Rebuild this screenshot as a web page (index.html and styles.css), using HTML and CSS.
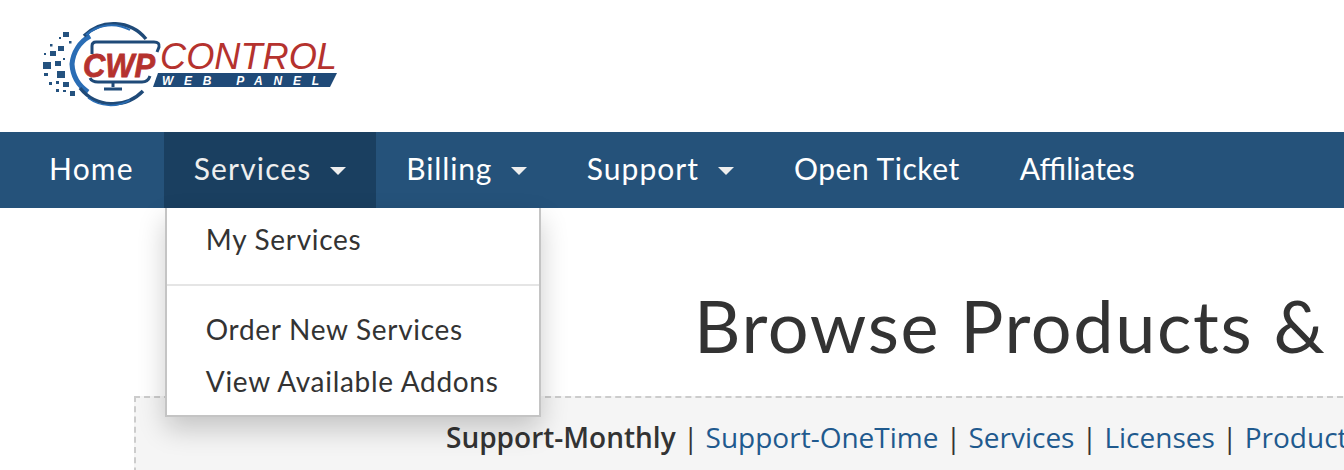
FILE: index.html

```html
<!DOCTYPE html>
<html lang="en">
  <head>
    <meta name="viewport" content="width=device-width, initial-scale=1">
    <title>Browse Products</title>
    <link rel="stylesheet" href="styles.css">
  </head>
  <body>
    <header class="top">
      <svg class="logo" width="320" height="105" viewBox="0 0 320 105">
        <g fill="#24527f">
          <rect x="33" y="22" width="6" height="5"/>
          <rect x="29" y="27" width="2" height="2"/>
          <rect x="39" y="31" width="2.500" height="2.500"/>
          <rect x="20" y="34" width="2.500" height="2.500"/>
          <rect x="28" y="36" width="6" height="5"/>
          <rect x="20" y="41" width="6" height="5"/>
          <rect x="14" y="43" width="2" height="2"/>
          <rect x="33" y="48" width="2" height="2"/>
          <rect x="13" y="52" width="8" height="7"/>
          <rect x="25" y="51" width="6" height="5"/>
          <rect x="14" y="63" width="4" height="3"/>
          <rect x="27" y="61" width="8" height="7"/>
          <rect x="19" y="72" width="3" height="3"/>
          <rect x="26" y="71" width="3" height="3"/>
          <rect x="33" y="72" width="6" height="5"/>
          <rect x="26" y="79" width="3" height="3"/>
          <rect x="33" y="80" width="3" height="2"/>
          <rect x="40" y="81" width="5" height="5"/>
        </g>
        <path d="M60 26 A36 36 0 0 0 42 54 A36 36 0 0 0 58 82" fill="none" stroke="#2a6db5" stroke-width="5"/>
        <path d="M54 26 A42 42 0 0 1 116 29" fill="none" stroke="#1f4a78" stroke-width="3.500"/>
        <path d="M56 25 A38 38 0 0 1 100 20" fill="none" stroke="#2a6db5" stroke-width="2"/>
        <path d="M62 44 V36 Q62 32 66 32 H124 Q130 32 129 37 L127 42" fill="none" stroke="#1f4a78" stroke-width="3"/>
        <path d="M60 68 Q62 72 68 72 H112 Q118 72 120 66" fill="none" stroke="#1f4a78" stroke-width="3"/>
        <path d="M83 72 V77 M74 79 H92" fill="none" stroke="#1f4a78" stroke-width="3"/>
        <path d="M50 78 A42 42 0 0 0 113 81" fill="none" stroke="#1f4a78" stroke-width="3.500"/>
        <path d="M58 88 A38 38 0 0 0 100 90" fill="none" stroke="#2a6db5" stroke-width="1.500"/>
        <text class="logo-cwp" x="53" y="67" textLength="72" lengthAdjust="spacingAndGlyphs">CWP</text>
        <text class="logo-control" x="130" y="59" textLength="177" lengthAdjust="spacingAndGlyphs">CONTROL</text>
        <polygon points="128,63 307,63 300,77 123,77" fill="#1f4a78"/>
        <text class="logo-panel" x="132" y="75" textLength="157">WEB PANEL</text>
      </svg>
    </header>

    <nav class="menu">
      <a class="menu-item home" href="#">Home</a>
      <div class="menu-group">
        <a class="menu-item active" href="#">Services <span class="caret"></span></a>
        <div class="dropdown">
          <a class="drop-first" href="#">My Services</a>
          <hr>
          <a href="#">Order New Services</a>
          <a href="#">View Available Addons</a>
        </div>
      </div>
      <a class="menu-item billing" href="#">Billing <span class="caret"></span></a>
      <a class="menu-item support" href="#">Support <span class="caret"></span></a>
      <a class="menu-item ticket" href="#">Open Ticket</a>
      <a class="menu-item affiliates" href="#">Affiliates</a>
    </nav>

    <main class="content">
      <h1>Browse Products &amp; Services</h1>
      <div class="cats">
        <b>Support-Monthly</b> | <a href="#">Support-OneTime</a> | <a href="#">Services</a> | <a href="#">Licenses</a> | <a href="#">Products</a>
      </div>
    </main>
  </body>
</html>
```

FILE: styles.css

```css
html {
  height: 100%;
}

body {
  margin: 0;
  height: 100%;
  overflow: hidden;
  background-color: #fff;
  color: #333;
  font-family: 'Lato', 'Open Sans', sans-serif;
}

a {
  text-decoration: none;
}

.top {
  height: 122px;
  padding: 10px 0 0 30px;
}

.logo {
  display: block;
}

.logo-cwp {
  font: italic bold 33px 'Liberation Sans', sans-serif;
  fill: #b5322e;
  stroke: #b5322e;
  stroke-width: 0.8px;
}

.logo-control {
  font: italic 36px 'Liberation Sans', sans-serif;
  fill: #b5322e;
}

.logo-panel {
  font: italic bold 12px 'Liberation Sans', sans-serif;
  fill: #fff;
}

.menu {
  display: flex;
  height: 76px;
  padding-left: 19px;
  background-color: #25527a;
}

.menu-group {
  position: relative;
  display: flex;
}

.menu-item {
  display: flex;
  align-items: center;
  padding: 0 30px 4px;
  color: #fff;
  font-size: 30px;
  letter-spacing: 1.15px;
  white-space: pre;
}

.menu-item.home {
  letter-spacing: 1.2px;
}

.menu-item.billing {
  letter-spacing: 0.85px;
}

.menu-item.support {
  letter-spacing: 1.05px;
}

.menu-item.ticket {
  letter-spacing: 0.55px;
}

.menu-item.affiliates {
  letter-spacing: 0;
}

.menu-item.active {
  background-color: #1a3f60;
  color: #eee;
}

.caret {
  display: inline-block;
  margin-left: 10px;
  margin-top: 5px;
  border-top: 8px solid #eee;
  border-left: 8px solid transparent;
  border-right: 8px solid transparent;
}

.dropdown {
  position: absolute;
  top: 76px;
  left: 1px;
  z-index: 5;
  width: 372px;
  height: 205px;
  padding-bottom: 2px;
  background-color: #fff;
  border: 2px solid #c4c4c4;
  border-top: none;
  box-shadow: 0 12px 26px rgba(0, 0, 0, 0.2);
}

.dropdown a {
  display: block;
  padding: 0 39px;
  height: 52px;
  line-height: 50px;
  color: #333;
  font-size: 28px;
  letter-spacing: 0.7px;
  white-space: nowrap;
}

.dropdown .drop-first {
  height: 64px;
  line-height: 63px;
}

.dropdown hr {
  margin: 12px 0 18px;
  border: none;
  border-top: 2px solid #e5e5e5;
}

.content {
  white-space: nowrap;
}

h1 {
  margin: 0;
  padding: 76px 0 0 694px;
  height: 82px;
  font-size: 72px;
  font-weight: 400;
  letter-spacing: 1.65px;
  line-height: 82px;
  color: #333;
}

.cats {
  box-sizing: border-box;
  margin: 30px 0 0 134px;
  width: 1600px;
  height: 200px;
  padding: 19px 0 0 310px;
  background-color: #f5f5f5;
  border: 2px dashed #ccc;
  font-family: 'Open Sans', sans-serif;
  font-size: 28px;
  line-height: 40px;
  color: #333;
}

.cats b {
  font-weight: 600;
}

.cats a {
  color: #1f5a8e;
}
```
